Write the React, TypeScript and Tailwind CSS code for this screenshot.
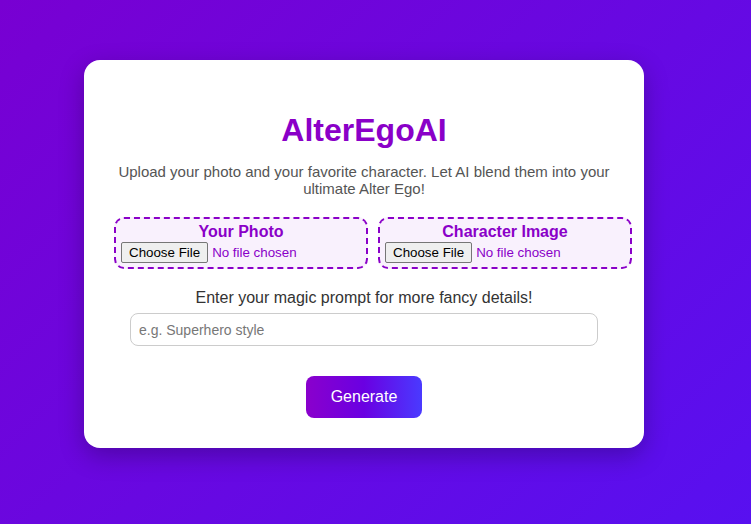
import React from "react";

const UploadBox = ({ label }: { label: string }) => {
  return (
    <div className="w-[254px] shrink-0 rounded-[10px] border-2 border-dashed border-[#8a00c8] bg-[#f9f1fd] px-[5px] py-[4px]">
      <h3 className="text-center text-[16px] font-bold leading-[18px] text-[#8a00c8]">{label}</h3>
      <input
        type="file"
        className="mt-[1px] block h-[21px] text-[13.33px] leading-[19px] text-[#8a00c8] file:mr-[4px] file:h-[21px] file:rounded-[2px] file:border file:border-solid file:border-[#767676] file:bg-[#efefef] file:px-[7px] file:text-[13.33px] file:text-black"
      />
    </div>
  );
};

export default function App() {
  return (
    <div
      className="min-h-[524px] bg-[linear-gradient(135deg,#7800d2,#5810f0)] pl-[84px] pt-[60px] pb-[76px]"
      style={{ fontFamily: '"Liberation Sans", Arial, sans-serif' }}
    >
      <div className="flex w-[560px] flex-col items-center rounded-[16px] bg-white p-[30px] shadow-[0_8px_24px_rgba(0,0,0,0.25)]">
        <h1 className="mt-[22px] text-[32px] font-bold leading-[37px] text-[#8a00c8]">AlterEgoAI</h1>
        <p className="mt-[14px] w-[500px] text-center text-[15px] leading-[17px] text-[#555]">
          Upload your photo and your favorite character. Let AI blend them into your ultimate Alter Ego!
        </p>
        <div className="mt-[20px] flex w-[500px] gap-[10px]">
          <UploadBox label="Your Photo" />
          <UploadBox label="Character Image" />
        </div>
        <label className="mt-[20px] text-[16px] leading-[18px] text-[#333]">
          Enter your magic prompt for more fancy details!
        </label>
        <input
          type="text"
          placeholder="e.g. Superhero style"
          className="mt-[6px] h-[33px] w-[468px] rounded-[8px] border border-[#ccc] px-[8px] text-[14px] text-[#333] placeholder:text-[#777] outline-none"
        />
        <button className="mt-[30px] h-[42px] w-[116px] rounded-[8px] bg-[linear-gradient(90deg,#8a00cc,#6a00e2,#4a3aff)] text-[16px] text-white">
          Generate
        </button>
      </div>
    </div>
  );
}
